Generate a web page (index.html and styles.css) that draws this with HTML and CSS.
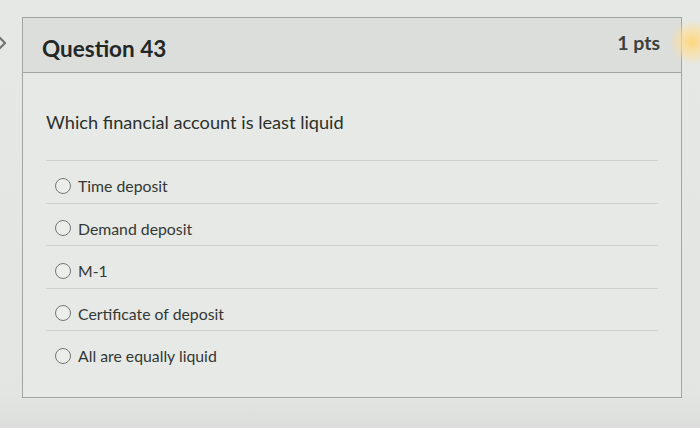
FILE: index.html
```html
<!DOCTYPE html>
<html>
<head>
<meta charset="utf-8">
<link rel="stylesheet" href="styles.css">
</head>
<body>
<div class="page">
  <div class="side-arrow">
    <svg width="12" height="18" viewBox="0 0 12 18"><path d="M0 2 L7 9 L0 16" fill="none" stroke="#6f7470" stroke-width="2.2" stroke-linejoin="round"/></svg>
  </div>
  <div class="card">
    <div class="header">
      <span class="title">Question 43</span>
      <span class="pts">1 pts</span>
    </div>
    <div class="body">
      <p class="question">Which financial account is least liquid</p>
      <ul class="answers">
        <li class="answer"><span class="radio"></span><span>Time deposit</span></li>
        <li class="answer"><span class="radio"></span><span>Demand deposit</span></li>
        <li class="answer"><span class="radio"></span><span>M-1</span></li>
        <li class="answer"><span class="radio"></span><span>Certificate of deposit</span></li>
        <li class="answer"><span class="radio"></span><span>All are equally liquid</span></li>
      </ul>
    </div>
  </div>
  <div class="glow"></div>
</div>
</body>
</html>
```
FILE: styles.css
```css
html, body {
  margin: 0;
  padding: 0;
}
body {
  width: 700px;
  height: 428px;
  overflow: hidden;
  background: linear-gradient(180deg, #e6e8e5 0%, #e3e5e2 92%, #dcdedb 100%);
  font-family: Lato, "Liberation Sans", sans-serif;
  color: #2d3330;
}
.page {
  position: relative;
  width: 700px;
  height: 428px;
  padding: 17px 0 0 22px;
  box-sizing: border-box;
}
.side-arrow {
  position: absolute;
  left: -2px;
  top: 34px;
}
.card {
  width: 660px;
  height: 381px;
  box-sizing: border-box;
  border: 1.5px solid #a2a5a2;
  background: #e7e9e6;
  display: flex;
  flex-direction: column;
}
.header {
  height: 55px;
  box-sizing: border-box;
  background: #dcdedb;
  border-bottom: 1.5px solid #a2a5a2;
  display: flex;
  align-items: center;
  justify-content: space-between;
  padding: 0 21px 0 19px;
}
.title {
  font-weight: 700;
  font-size: 22.5px;
  color: #232826;
  margin-top: 6px;
}
.pts {
  font-weight: 700;
  font-size: 19.5px;
  color: #3d423f;
  margin-top: -5px;
}
.body {
  padding: 0 23px 0 23px;
}
.question {
  margin: 37px 0 0 0;
  font-size: 18.2px;
  line-height: 24px;
  color: #2b302d;
}
.answers {
  list-style: none;
  margin: 26px 0 0 0;
  padding: 0;
}
.answer {
  height: 42.5px;
  box-sizing: border-box;
  border-top: 1.5px solid #cdd0cd;
  display: flex;
  align-items: center;
  padding-left: 9px;
  font-size: 15.8px;
  color: #333835;
  padding-top: 8px;
}
.radio {
  width: 14px;
  height: 14px;
  border: 1.5px solid #737774;
  border-radius: 50%;
  margin-right: 7px;
  background: #eceeeb;
  flex: none;
}
.glow {
  position: absolute;
  left: 670px;
  top: 20px;
  width: 44px;
  height: 44px;
  border-radius: 50%;
  background: radial-gradient(circle, rgba(255, 214, 120, 0.95) 0%, rgba(255, 222, 150, 0.6) 40%, rgba(255, 230, 180, 0) 72%);
}
```
